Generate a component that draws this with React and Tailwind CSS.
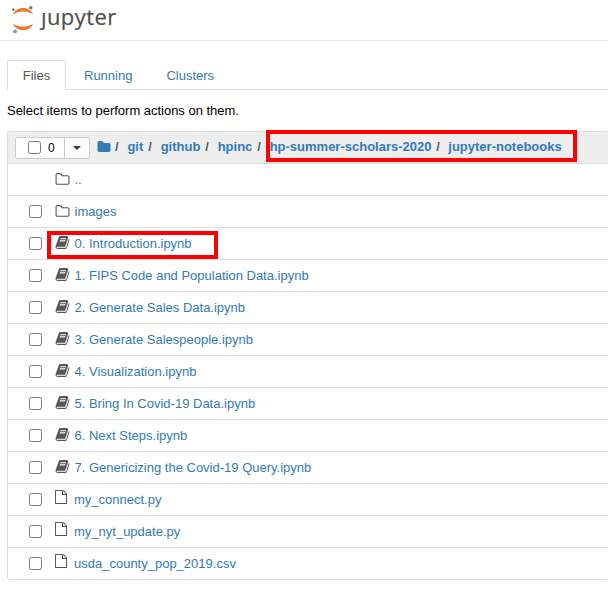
import React from "react";

const ICONS = {
  folder:
    "M1728 608v704q0 92-66 158t-158 66h-1216q-92 0-158-66t-66-158v-960q0-92 66-158t158-66h320q92 0 158 66t66 158v32h672q92 0 158 66t66 158z",
  folderOpen:
    "M1600 1312v-704q0-40-28-68t-68-28h-704q-40 0-68-28t-28-68v-64q0-40-28-68t-68-28h-320q-40 0-68 28t-28 68v960q0 40 28 68t68 28h1216q40 0 68-28t28-68zm128-704v704q0 92-66 158t-158 66h-1216q-92 0-158-66t-66-158v-960q0-92 66-158t158-66h320q92 0 158 66t66 158v32h672q92 0 158 66t66 158z",
  book: "M1703 478q40 57 18 129l-275 906q-19 64-76.5 107.5t-122.5 43.5h-923q-77 0-148.5-53.5t-99.5-131.5q-24-67-2-127 0-4 3-27t4-37q1-8-3-21.5t-3-19.5q2-11 8-21t16.5-23.5 16.5-23.5q23-38 45-91.5t30-91.5q3-10 .5-30t-.5-28q3-11 17-28t17-23q21-36 42-92t25-90q1-9-2.5-32t.5-28q4-13 22-30.5t22-22.5q19-26 42.5-84.5t27.5-96.5q1-8-3-25.5t-2-26.5q2-8 9-18t18-23 17-21q8-12 16.5-30.5t15-35 16-36 19.5-32 26.5-23.5 36-11.5 47.5 5.5l-1 3q38-9 51-9h761q74 0 114 56t18 130l-274 906q-36 119-71.5 153.5t-128.5 34.5h-869q-27 0-38 15-11 16-1 43 24 70 144 70h923q29 0 56-15.5t35-41.5l300-987q7-22 5-57 38 15 59 43zm-1064 2q-4 13 2 22.5t20 9.5h608q13 0 25.5-9.5t16.5-22.5l21-64q4-13-2-22.5t-20-9.5h-608q-13 0-25.5 9.5t-16.5 22.5zm-83 256q-4 13 2 22.5t20 9.5h608q13 0 25.5-9.5t16.5-22.5l21-64q4-13-2-22.5t-20-9.5h-608q-13 0-25.5 9.5t-16.5 22.5z",
  file: "M1596 380q28 28 48 76t20 88v1152q0 40-28 68t-68 28h-1344q-40 0-68-28t-28-68v-1600q0-40 28-68t68-28h896q40 0 88 20t76 48zm-444-244v376h376q-10-29-22-41l-313-313q-12-12-41-22zm384 1528v-1024h-416q-40 0-68-28t-28-68v-416h-768v1536h1280z",
};

const ICON_OFFSET = {
  folderOpen: "ml-[12.5px] mr-[5px] size-[15px]",
  book: "ml-[12.5px] mr-[5px] -mt-[3px] size-[15px]",
  file: "ml-[12px] mr-[6px] -mt-[5px] size-[14px]",
};

function Icon({ name, className }) {
  return (
    <svg viewBox="0 0 1792 1792" fill="currentColor" className={`shrink-0 ${className}`}>
      <path d={ICONS[name]} />
    </svg>
  );
}

function Logo() {
  return (
    <svg viewBox="0 0 28 32" className="h-8 w-7 shrink-0">
      <path d="M1.8 11.6 C5 2.7 19 2.7 22.2 11.6 C17 7.4 7 7.4 1.8 11.6Z" fill="#f37726" />
      <path d="M1.8 20.4 C5 29.3 19 29.3 22.2 20.4 C17 24.6 7 24.6 1.8 20.4Z" fill="#f37726" />
      <circle cx="19.8" cy="4.7" r="1.8" fill="#767677" />
      <circle cx="4" cy="28.5" r="2.1" fill="#9e9e9e" />
      <circle cx="2.4" cy="6.7" r="1.2" fill="#616262" />
    </svg>
  );
}

const Box = ({ className = "" }) => (
  <input
    type="checkbox"
    className={`size-[13px] shrink-0 appearance-none rounded-[2.5px] border border-[#767676] bg-white ${className}`}
  />
);

const CRUMBS = ["git", "github", "hpinc"];

const ROWS = [
  ["folderOpen", ".."],
  ["folderOpen", "images"],
  ["book", "0. Introduction.ipynb"],
  ["book", "1. FIPS Code and Population Data.ipynb"],
  ["book", "2. Generate Sales Data.ipynb"],
  ["book", "3. Generate Salespeople.ipynb"],
  ["book", "4. Visualization.ipynb"],
  ["book", "5. Bring In Covid-19 Data.ipynb"],
  ["book", "6. Next Steps.ipynb"],
  ["book", "7. Genericizing the Covid-19 Query.ipynb"],
  ["file", "my_connect.py"],
  ["file", "my_nyt_update.py"],
  ["file", "usda_county_pop_2019.csv"],
];

function Row({ icon, label }) {
  const up = label === "..";
  return (
    <div className="relative flex h-8 items-center border-t border-[#ddd] pl-[21px]">
      <Box className={up ? "invisible" : ""} />
      <Icon name={icon} className={`text-[#555] ${ICON_OFFSET[icon]}`} />
      <a className="text-[#337ab7]">{label}</a>
      {label.startsWith("0.") && (
        <div className="absolute top-[3px] left-[39px] h-[28px] w-[171px] border-4 border-[#fe0000]" />
      )}
    </div>
  );
}

export default function App() {
  return (
    <div className="h-[593px] w-[608px] overflow-hidden bg-white font-['Liberation_Sans',Arial,sans-serif] text-[13px] leading-5 text-black">
      <header className="flex h-[41px] items-start border-b border-[#e7e7e7] pt-[3px] pl-[11px]">
        <Logo />
        <span className="-mt-[4px] ml-[2px] flex font-['Open_Sans',sans-serif] text-[22px] leading-[34px] tracking-[0.4px] text-[#4e4e4e] [-webkit-text-stroke:0.2px_#4e4e4e]">
          <span className="[clip-path:inset(13px_-4px_0_-6px)]">j</span>
          <span>upyter</span>
        </span>
      </header>
      <main className="pt-[19px] pl-[7px]">
        <nav className="flex h-[30px] items-end border-b border-[#ddd]">
          <a className="-mb-px flex h-[30px] w-[59px] items-center justify-center rounded-t-[2px] border border-b-0 border-[#ddd] bg-white text-[#555]">
            Files
          </a>
          <a className="-mb-px ml-[18px] flex h-[29px] items-center text-[#337ab7]">Running</a>
          <a className="-mb-px ml-[34px] flex h-[29px] items-center text-[#337ab7]">Clusters</a>
        </nav>
        <p className="mt-[11px] tracking-[-0.02px]">Select items to perform actions on them.</p>
        <section className="mt-[10px] -mr-px rounded-[2px] border border-[#ddd]">
          <div className="flex h-[31px] items-center bg-[#eee] pl-[7px]">
            <div className="flex h-[22px] w-[75px] rounded-[2px] border border-[#ccc] bg-white">
              <div className="flex w-[49px] items-center border-r border-[#ccc] pl-[12px] text-[12px]">
                <Box />
                <span className="ml-[7px]">0</span>
              </div>
              <div className="flex flex-1 items-center justify-center">
                <span className="mt-px border-x-4 border-t-4 border-x-transparent border-t-[#333]" />
              </div>
            </div>
            <div className="relative -mt-[2px] flex items-center font-bold text-[#337ab7]">
              <Icon name="folder" className="ml-[7px] size-[14px]" />
              <span className="ml-[4px] text-[#5e5e5e]">/</span>
              {CRUMBS.map((c) => (
                <React.Fragment key={c}>
                  <a className="ml-[8.8px]">{c}</a>
                  <span className="ml-[4.9px] text-[#5e5e5e]">/</span>
                </React.Fragment>
              ))}
              <a className="ml-[8.8px]">hp-summer-scholars-2020</a>
              <span className="ml-[4.8px] text-[#5e5e5e]">/</span>
              <a className="ml-[8.4px]">jupyter-notebooks</a>
              <div className="absolute -top-[7px] left-[176px] h-[32px] w-[311px] border-4 border-[#fe0000]" />
            </div>
          </div>
          {ROWS.map(([icon, label]) => (
            <Row key={label} icon={icon} label={label} />
          ))}
        </section>
      </main>
    </div>
  );
}
